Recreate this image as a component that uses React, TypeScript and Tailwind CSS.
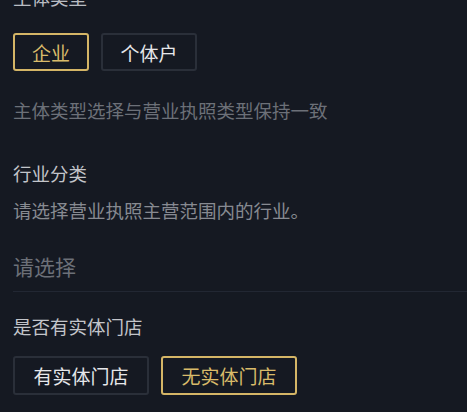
import { useState } from "react";

const font = { fontFamily: '"Noto Sans CJK SC", "Noto Sans", sans-serif' };

const Choice = ({
  label,
  active,
  width,
  onClick,
}: {
  label: string;
  active: boolean;
  width: string;
  onClick: () => void;
}) => (
  <button
    onClick={onClick}
    className={`${width} rounded-[3px] border-2 text-[19px] leading-none flex items-center justify-center ${
      active
        ? "border-[#d4b566] text-[#d9bb6a]"
        : "border-[#2a2f39] text-[#e6e7ea]"
    }`}
  >
    {label}
  </button>
);

const App = () => {
  const [subject, setSubject] = useState("company");
  const [store, setStore] = useState("no");

  return (
    <div
      style={font}
      className="w-[467px] h-[412px] overflow-hidden bg-[#151922] flex flex-col"
    >
      <div className="px-[13px] flex flex-col">
        <div className="mt-[-13px] text-[18.5px] leading-[20px] text-[#b9bcc2]">
          主体类型
        </div>
        <div className="mt-[26px] flex gap-[12px]">
          <Choice
            label="企业"
            width="w-[76px] h-[38px]"
            active={subject === "company"}
            onClick={() => setSubject("company")}
          />
          <Choice
            label="个体户"
            width="w-[96px] h-[38px]"
            active={subject === "person"}
            onClick={() => setSubject("person")}
          />
        </div>
        <div className="mt-[29px] text-[18.5px] leading-[20px] text-[#6c7078]">
          主体类型选择与营业执照类型保持一致
        </div>
        <div className="mt-[43px] text-[18.5px] leading-[20px] text-[#c3c5ca]">
          行业分类
        </div>
        <div className="mt-[17px] text-[18.5px] leading-[20px] text-[#878a91]">
          请选择营业执照主营范围内的行业。
        </div>
        <div className="mt-[35px] text-[21px] leading-[22px] text-[#6c7078]">
          请选择
        </div>
      </div>
      <div className="ml-[13px] mt-[14px] h-px bg-[#222733]" />
      <div className="px-[13px] flex flex-col">
        <div className="mt-[24px] text-[18.5px] leading-[20px] text-[#c3c5ca]">
          是否有实体门店
        </div>
        <div className="mt-[20px] flex gap-[12px]">
          <Choice
            label="有实体门店"
            width="w-[136px] h-[39px]"
            active={store === "yes"}
            onClick={() => setStore("yes")}
          />
          <Choice
            label="无实体门店"
            width="w-[136px] h-[39px]"
            active={store === "no"}
            onClick={() => setStore("no")}
          />
        </div>
      </div>
    </div>
  );
};

export default App;
